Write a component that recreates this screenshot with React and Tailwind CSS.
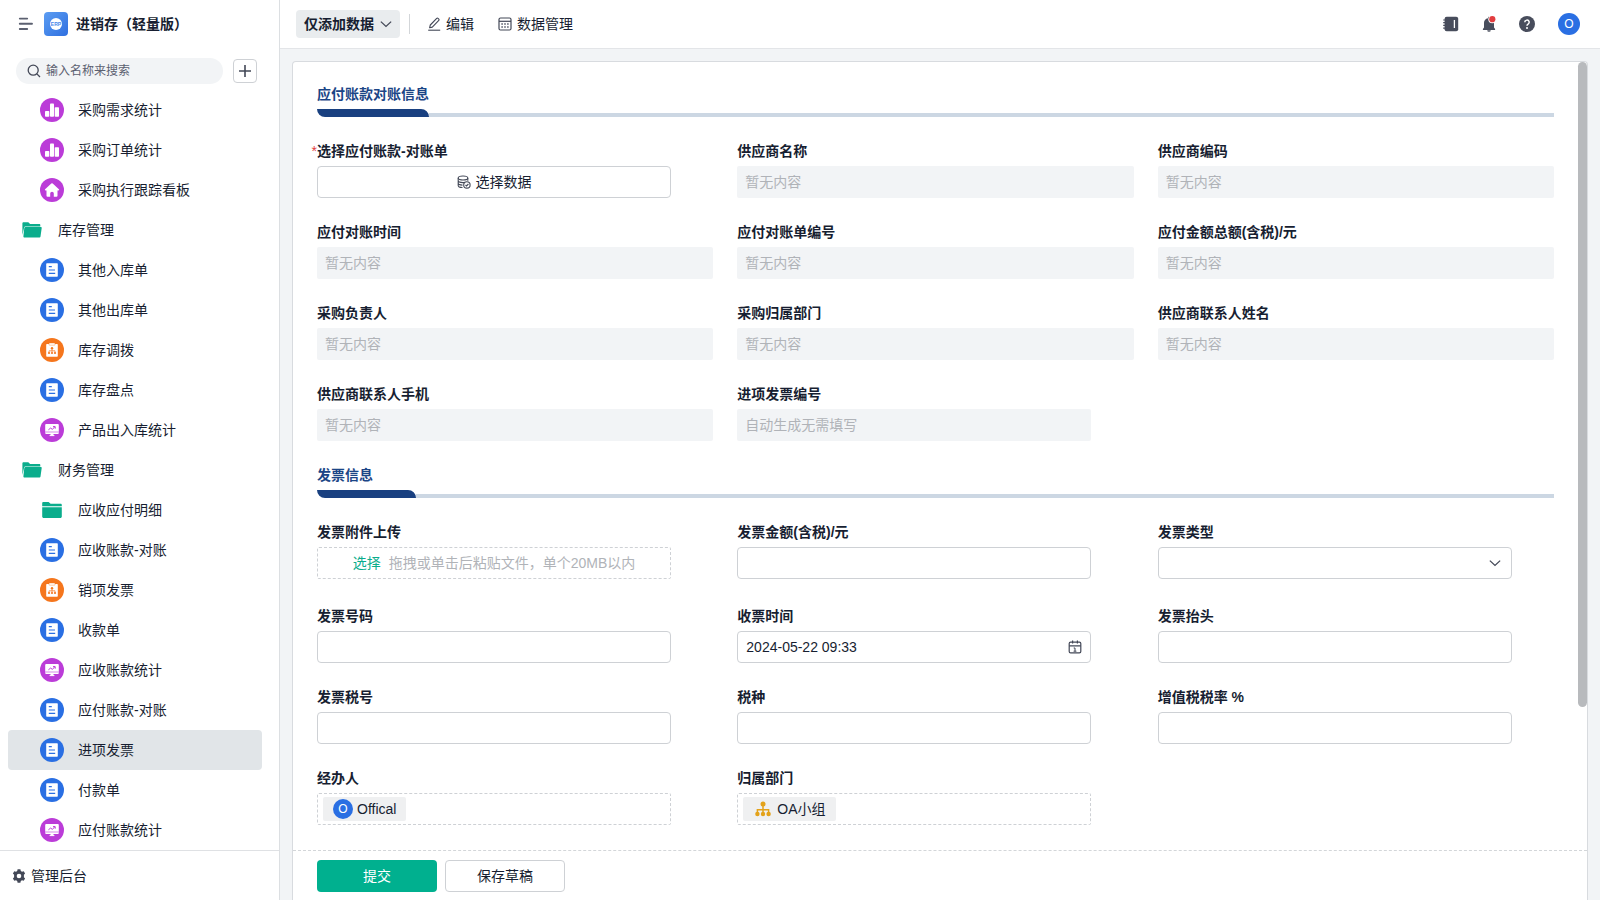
import React from 'react';

const BarsIcon = () => (
  <svg className="size-6 shrink-0" viewBox="0 0 24 24">
    <circle cx="12" cy="12" r="12" fill="#bb3cd8" />
    <g fill="#fff">
      <rect x="5" y="13" width="4.3" height="5.8" rx="0.8" />
      <rect x="10" y="5.4" width="4" height="13.4" rx="0.8" />
      <rect x="14.7" y="9.2" width="4.3" height="9.6" rx="0.8" />
    </g>
  </svg>
);

const HouseIcon = () => (
  <svg className="size-6 shrink-0" viewBox="0 0 24 24">
    <circle cx="12" cy="12" r="12" fill="#bb3cd8" />
    <path
      d="M11.3 5.6a1 1 0 0 1 1.4 0l6.2 5.6c.5.5.2 1.2-.5 1.2h-.9v5.4a1 1 0 0 1-1 1h-2.7v-3.2a1.8 1.8 0 0 0-3.6 0v3.2H7.5a1 1 0 0 1-1-1v-5.4h-.9c-.7 0-1-.7-.5-1.2z"
      fill="#fff"
    />
  </svg>
);

const DocIcon = () => (
  <svg className="size-6 shrink-0" viewBox="0 0 24 24">
    <circle cx="12" cy="12" r="12" fill="#2a6fe3" />
    <rect x="6.2" y="5.3" width="11.6" height="13.5" rx="0.8" fill="#fff" />
    <path d="M8.8 8.6h3M8.8 12h6.2M8.8 15.4h6.4" stroke="#2a6fe3" strokeWidth="1.1" />
  </svg>
);

const FlowIcon = () => (
  <svg className="size-6 shrink-0" viewBox="0 0 24 24">
    <circle cx="12" cy="12" r="12" fill="#f5761d" />
    <rect x="6.2" y="6" width="11.6" height="12.8" rx="0.8" fill="#fff" />
    <rect x="9" y="5" width="6" height="2.2" rx="0.6" fill="#fff" stroke="#f5761d" strokeWidth="0.4" />
    <circle cx="12" cy="10.2" r="1.2" fill="#f5761d" />
    <path d="M12 10.5v4M9 14.5v-1.7h6v1.7" fill="none" stroke="#f5761d" strokeWidth="0.7" />
    <g fill="#f5761d">
      <circle cx="9" cy="15" r="1.1" />
      <circle cx="12" cy="15" r="1.1" />
      <circle cx="15" cy="15" r="1.1" />
    </g>
  </svg>
);

const BoardIcon = () => (
  <svg className="size-6 shrink-0" viewBox="0 0 24 24">
    <circle cx="12" cy="12" r="12" fill="#bb3cd8" />
    <rect x="5.2" y="6" width="13.6" height="10" rx="1" fill="#fff" />
    <path d="M5.2 14h13.6" stroke="#bb3cd8" strokeWidth="0.6" />
    <path d="M12 16v1.6" stroke="#fff" strokeWidth="3" />
    <path d="M9.6 17.6h4.8" stroke="#fff" strokeWidth="1" />
    <path d="M8.4 11.8l2.2-1.7 1.7 1.2 2.5-2.4M13 8.6h2.2v2.1" fill="none" stroke="#bb3cd8" strokeWidth="1" />
  </svg>
);

const FolderIcon = () => (
  <svg className="size-6 shrink-0" viewBox="0 0 24 24" fill="#0aad8c">
    <path d="M2.2 8.3V5.4c0-.8.5-1.3 1.2-1.3h5.2l2 1.7h10c.7 0 1.2.5 1.2 1.2v1.3z" />
    <path d="M2.2 9.2h19.6v9.2c0 .9-.6 1.5-1.5 1.5H3.7c-.9 0-1.5-.6-1.5-1.5z" />
  </svg>
);

const OpenFolderIcon = () => (
  <svg className="size-5 shrink-0" viewBox="0 0 20 20" fill="#0aad8c">
    <path d="M.4 15V3.4c0-.7.5-1.1 1.1-1.1h4.8l1.8 1.6h9.2c.6 0 1 .4 1 1v1.5H3.6c-.8 0-1.4.4-1.5 1.2z" />
    <path d="M3.4 7h15.4c.6 0 1 .5.9 1.1l-1.2 8.4c-.1.6-.6 1-1.2 1H2.6c-.8 0-1.3-.6-1.2-1.3L2.3 7.900c.1-.5.6-.9 1.1-.9z" />
  </svg>
);

const ChevronIcon = ({ className }) => (
  <svg className={className} viewBox="0 0 14 14" fill="none" stroke="#434857" strokeWidth="1.5">
    <path d="M1 4.2 7 9.9l6-5.7" />
  </svg>
);

const icons = {
  bars: BarsIcon,
  house: HouseIcon,
  doc: DocIcon,
  flow: FlowIcon,
  board: BoardIcon,
  folder: FolderIcon,
};

const menu = [
  { icon: 'bars', label: '采购需求统计' },
  { icon: 'bars', label: '采购订单统计' },
  { icon: 'house', label: '采购执行跟踪看板' },
  { group: true, label: '库存管理' },
  { icon: 'doc', label: '其他入库单' },
  { icon: 'doc', label: '其他出库单' },
  { icon: 'flow', label: '库存调拨' },
  { icon: 'doc', label: '库存盘点' },
  { icon: 'board', label: '产品出入库统计' },
  { group: true, label: '财务管理' },
  { icon: 'folder', label: '应收应付明细' },
  { icon: 'doc', label: '应收账款-对账' },
  { icon: 'flow', label: '销项发票' },
  { icon: 'doc', label: '收款单' },
  { icon: 'board', label: '应收账款统计' },
  { icon: 'doc', label: '应付账款-对账' },
  { icon: 'doc', label: '进项发票', active: true },
  { icon: 'doc', label: '付款单' },
  { icon: 'board', label: '应付账款统计' },
];

const MenuItem = ({ item }) => {
  if (item.group) {
    return (
      <a href="#" className="flex h-10 items-center gap-4 pl-[14px]">
        <OpenFolderIcon />
        {item.label}
      </a>
    );
  }
  const Icon = icons[item.icon];
  return (
    <a
      href="#"
      aria-current={item.active ? 'page' : undefined}
      className={`flex h-10 items-center gap-[14px] rounded pl-8 ${item.active ? 'bg-[#e1e5e8]' : ''}`}
    >
      <Icon />
      {item.label}
    </a>
  );
};

const Sidebar = () => (
  <aside className="flex w-[280px] shrink-0 flex-col border-r border-[#dcdfe2] bg-white">
    <div className="flex h-12 shrink-0 items-center pl-[18px]">
      <button type="button" aria-label="菜单">
        <svg className="size-4" viewBox="0 0 16 16" stroke="#5b6070" strokeWidth="1.9" strokeLinecap="round">
          <path d="M1.8 2.6h7.4M1.8 7.8h12.2M1.8 13h7.4" />
        </svg>
      </button>
      <span className="ml-[10px] flex size-6 items-center justify-center rounded bg-linear-to-br from-[#5c9df2] to-[#2f6fe0]">
        <span className="flex size-3 items-center justify-center rounded-full bg-white text-[5px] leading-none font-bold text-[#4a88ea]">
          ERP
        </span>
      </span>
      <h1 className="ml-2 text-sm font-semibold">进销存（轻量版）</h1>
    </div>

    <div className="flex h-[42px] shrink-0 items-start gap-[10px] pt-[10px] pr-[22px] pl-4">
      <label className="flex h-[26px] flex-1 items-center gap-[5px] rounded-full bg-[#f2f4f6] pl-[11px]">
        <svg className="size-[14px] shrink-0" viewBox="0 0 14 14" fill="none" stroke="#434857" strokeWidth="1.3">
          <circle cx="6.2" cy="6.2" r="5" />
          <path d="M9.9 9.9 13 13" />
        </svg>
        <input
          type="text"
          aria-label="搜索"
          placeholder="输入名称来搜索"
          className="w-full bg-transparent text-xs outline-none placeholder:text-[#5b6070]"
        />
      </label>
      <button
        type="button"
        aria-label="新建"
        className="mt-px flex size-6 items-center justify-center rounded border border-[#ced1d5]"
      >
        <svg className="size-[14px]" viewBox="0 0 14 14" stroke="#434857" strokeWidth="1.6">
          <path d="M7 1v12M1 7h12" />
        </svg>
      </button>
    </div>

    <nav className="min-h-0 flex-1 overflow-hidden pr-[17px] pl-2">
      {menu.map((item) => (
        <MenuItem key={item.label} item={item} />
      ))}
    </nav>

    <a href="#" className="flex h-[50px] shrink-0 items-center gap-[5px] border-t border-[#dfe1e4] pl-3">
      <svg className="size-[14px]" viewBox="0 0 14 14">
        <path
          d="M5.6.3h2.8l.4 1.7 1.2.7 1.7-.5 1.4 2.4-1.2 1.2v2.4l1.2 1.2-1.4 2.4-1.7-.5-1.2.7-.4 1.7H5.6L5.2 12 4 11.3l-1.7.5L.9 9.400 2.1 8.2V5.8L.9 4.600l1.400-2.400 1.700.5L5.200 2z"
          fill="#434857"
        />
        <circle cx="7" cy="7" r="2.3" fill="#fff" />
      </svg>
      管理后台
    </a>
  </aside>
);

const Header = () => (
  <header className="flex h-[49px] shrink-0 items-center border-b border-[#e3e5e8] bg-white pr-5 pl-4">
    <button type="button" className="flex h-7 items-center gap-[6px] rounded bg-[#e9ecee] px-2 font-semibold">
      仅添加数据
      <ChevronIcon className="size-3" />
    </button>
    <span className="ml-[9px] h-5 w-px bg-[#d3d6d9]" />
    <button type="button" className="ml-[17px] flex items-center gap-[5px]">
      <svg className="size-[14px]" viewBox="0 0 14 14" fill="none" stroke="#434857" strokeWidth="1.1" strokeLinejoin="round">
        <path d="M2.6 10.8 3.3 8 9.7 1.3a.9.9 0 0 1 1.3 0l.8.8a.9.9 0 0 1 0 1.3L5.3 10.1z" />
        <path d="M1.2 13.2h12" />
      </svg>
      编辑
    </button>
    <button type="button" className="ml-6 flex items-center gap-[5px]">
      <svg className="size-[14px]" viewBox="0 0 14 14" fill="none" stroke="#434857" strokeWidth="1.2">
        <rect x="1" y="1" width="12" height="12" rx="1.5" />
        <path d="M1 4.3h12" />
        <path d="M3.4 7h1.4M6.3 7h1.4M9.2 7h1.4M3.4 10h1.4M6.3 10h1.4M9.2 10h1.4" strokeWidth="1.5" />
      </svg>
      数据管理
    </button>

    <div className="ml-auto flex items-center">
      <button type="button" aria-label="通讯录" className="mr-[22px]">
        <svg className="size-4" viewBox="0 0 16 16">
          <rect x="1.6" y="0.7" width="13.6" height="14.6" rx="2" fill="#484d5c" />
          <path d="M.2 4h3M.2 6.7h3M.2 9.4h3M.2 12.1h3" stroke="#484d5c" strokeWidth="1.2" />
          <path d="M11.4 4v8" stroke="#fff" strokeWidth="1.3" />
        </svg>
      </button>
      <button type="button" aria-label="通知" className="mr-[22px]">
        <svg className="size-4" viewBox="0 0 16 16">
          <path
            d="M8 .8c.5 0 1 .4 1 1v.4a5 5 0 0 1 4 4.900v4.400l1.100 1.500v1.100H1.900V13l1.100-1.500V7.100a5 5 0 0 1 4-4.900v-.4c0-.6.5-1 1-1zM6.200 14.3h3.600a1.800 1.500 0 0 1-3.600 0z"
            fill="#484d5c"
          />
          <circle cx="11.3" cy="3.2" r="4" fill="#fff" />
          <circle cx="11.3" cy="3.2" r="3.1" fill="#e23d3f" />
        </svg>
      </button>
      <button type="button" aria-label="帮助" className="mr-[23px]">
        <svg className="size-4" viewBox="0 0 16 16" fill="none">
          <circle cx="8" cy="8" r="8" fill="#484d5c" />
          <path d="M5.8 6.3a2.2 2.2 0 1 1 3.3 1.9c-.8.5-1.1.8-1.1 1.6" stroke="#fff" strokeWidth="1.5" />
          <circle cx="8" cy="11.9" r="1" fill="#fff" />
        </svg>
      </button>
      <button
        type="button"
        aria-label="账户"
        className="flex size-[22px] items-center justify-center rounded-full bg-[#2a6fe3] text-xs text-white"
      >
        O
      </button>
    </div>
  </header>
);

const SectionTitle = ({ children }) => (
  <div className="col-span-3 flex items-end">
    <h2 className="min-w-[99px] shrink-0 font-semibold text-[#1b4586]">
      {children}
      <span className="mt-1 block h-2 rounded-tr-lg rounded-bl-lg bg-[#194080]" />
    </h2>
    <span className="h-1 flex-1 bg-[#ccd7e3]" />
  </div>
);

const Field = ({ id, label, required, children }) => (
  <div className="flex flex-col gap-1">
    <label htmlFor={id} className="relative self-start font-semibold">
      {required && <span className="absolute right-full font-normal text-[#e23d3f]">*</span>}
      {label}
    </label>
    {children}
  </div>
);

const ReadonlyField = ({ id, label, text = '暂无内容', className = '' }) => (
  <Field id={id} label={label}>
    <input
      id={id}
      type="text"
      readOnly
      placeholder={text}
      className={`h-8 w-full rounded-xs bg-[#f2f4f6] px-2 outline-none placeholder:text-[#b0b3b8] ${className}`}
    />
  </Field>
);

const TextField = ({ id, label, value = '' }) => (
  <Field id={id} label={label}>
    <input
      id={id}
      type="text"
      defaultValue={value}
      className="h-8 w-full max-w-[354px] rounded border border-[#ced1d5] bg-white px-2 outline-none"
    />
  </Field>
);

const ChipField = ({ id, label, children }) => (
  <div className="flex flex-col gap-1" role="group" aria-labelledby={id}>
    <span id={id} className="font-semibold">
      {label}
    </span>
    <div className="flex h-8 max-w-[354px] items-center rounded-xs border border-dashed border-[#ced1d5] px-[5px]">
      <span className="flex h-6 items-center gap-1 rounded-xs bg-[#eff0f1] px-[10px]">{children}</span>
    </div>
  </div>
);

const InvoiceForm = () => (
  <form id="invoice" className="grid min-w-0 flex-1 grid-cols-3 content-start gap-x-6 gap-y-[23px] px-6 pt-[21px]">
    <SectionTitle>应付账款对账信息</SectionTitle>

    <Field id="statement" label="选择应付账款-对账单" required>
      <button
        id="statement"
        type="button"
        className="flex h-8 w-full max-w-[354px] items-center justify-center gap-[5px] rounded border border-[#ced1d5]"
      >
        <svg className="size-[14px]" viewBox="0 0 14 14" fill="none" stroke="#434857" strokeWidth="1.1">
          <ellipse cx="6" cy="3" rx="4.8" ry="2" />
          <path d="M1.2 3v7.5c0 1.1 1.8 2 4.3 2M10.8 3v2.8M1.2 5.6c0 1.1 2.1 2 4.8 2 .7 0 1.3-.1 1.8-.2M1.2 8.1c0 1.1 1.9 2 4.3 2" />
          <circle cx="9.9" cy="9.9" r="3.2" />
          <path d="m8.5 10 1 1 1.9-2" />
        </svg>
        选择数据
      </button>
    </Field>
    <ReadonlyField id="supplier" label="供应商名称" />
    <ReadonlyField id="supplier-code" label="供应商编码" />

    <ReadonlyField id="check-time" label="应付对账时间" />
    <ReadonlyField id="check-no" label="应付对账单编号" />
    <ReadonlyField id="total" label="应付金额总额(含税)/元" />

    <ReadonlyField id="buyer" label="采购负责人" />
    <ReadonlyField id="buyer-dept" label="采购归属部门" />
    <ReadonlyField id="contact" label="供应商联系人姓名" />

    <ReadonlyField id="contact-phone" label="供应商联系人手机" />
    <ReadonlyField id="invoice-id" label="进项发票编号" text="自动生成无需填写" className="max-w-[354px]" />
    <span />

    <SectionTitle>发票信息</SectionTitle>

    <Field id="attachment" label="发票附件上传">
      <div className="pb-[3px]">
        <button
          id="attachment"
          type="button"
          className="flex h-8 w-full max-w-[354px] items-center justify-center gap-2 rounded-xs border border-dashed border-[#ced1d5] text-[#b0b3b8]"
        >
          <span className="text-[#0aad8c]">选择</span>
          <span>拖拽或单击后粘贴文件，单个20MB以内</span>
        </button>
      </div>
    </Field>
    <TextField id="amount" label="发票金额(含税)/元" />
    <Field id="invoice-type" label="发票类型">
      <div className="relative max-w-[354px]">
        <select
          id="invoice-type"
          className="block h-8 w-full appearance-none rounded border border-[#ced1d5] bg-white px-2 outline-none"
        >
          <option value=""></option>
        </select>
        <ChevronIcon className="pointer-events-none absolute top-[10px] right-[11px] size-3" />
      </div>
    </Field>

    <TextField id="invoice-no" label="发票号码" />
    <Field id="receive-time" label="收票时间">
      <div className="relative max-w-[354px]">
        <input
          id="receive-time"
          type="text"
          defaultValue="2024-05-22 09:33"
          className="block h-8 w-full rounded border border-[#ced1d5] bg-white px-2 outline-none"
        />
        <svg
          className="pointer-events-none absolute top-[9px] right-[9px] size-[14px]"
          viewBox="0 0 14 14"
          fill="none"
          stroke="#434857"
          strokeWidth="1.2"
        >
          <rect x="1.2" y="2.2" width="11.6" height="10.6" rx="1.4" />
          <path d="M1.2 5.8h11.6M4.6.6v3M9.4.6v3" />
          <path d="M5.700 8H7v3.200M5.600 11.200h2.800" strokeWidth="1" />
        </svg>
      </div>
    </Field>
    <TextField id="invoice-title" label="发票抬头" />

    <TextField id="tax-no" label="发票税号" />
    <TextField id="tax-type" label="税种" />
    <TextField id="vat-rate" label="增值税税率 %" />

    <ChipField id="handler" label="经办人">
      <span className="flex size-5 items-center justify-center rounded-full bg-[#2a6fe3] text-xs text-white">O</span>
      Offical
    </ChipField>
    <ChipField id="department" label="归属部门">
      <svg className="mx-[2px] size-4" viewBox="0 0 16 16" fill="#e3a21a">
        <circle cx="8" cy="2.9" r="2.5" />
        <path d="M8 4v9M2.4 13V8.7h11.2V13" fill="none" stroke="#e3a21a" strokeWidth="1.5" />
        <circle cx="2.4" cy="13" r="2.2" />
        <circle cx="8" cy="13" r="2.2" />
        <circle cx="13.6" cy="13" r="2.2" />
      </svg>
      OA小组
    </ChipField>
  </form>
);

const App = () => (
  <div className="flex h-screen overflow-hidden bg-[#f2f4f6] font-['Liberation_Sans','Noto_Sans_CJK_SC',sans-serif] text-sm leading-[22px] text-[#171e31]">
    <Sidebar />
    <div className="flex min-w-0 flex-1 flex-col">
      <Header />
      <main className="flex min-h-0 flex-1 flex-col px-3 pt-3">
        <div className="flex min-h-0 flex-1 flex-col rounded-t border border-b-0 border-[#d8dbdf] bg-white">
          <div className="flex min-h-0 flex-1 overflow-hidden">
            <InvoiceForm />
            {/* Scrollbar */}
            <div className="w-[9px] shrink-0">
              <div className="h-9/11 rounded-full bg-[#b8babd]" />
            </div>
          </div>
          <div className="flex h-[50px] shrink-0 items-start gap-2 border-t border-dashed border-[#d3d6d9] px-6 pt-[9px]">
            <button type="submit" form="invoice" className="h-8 w-[120px] rounded bg-[#00b08f] text-white">
              提交
            </button>
            <button type="button" className="h-8 w-[120px] rounded border border-[#ced1d5]">
              保存草稿
            </button>
          </div>
        </div>
      </main>
    </div>
  </div>
);

export default App;
